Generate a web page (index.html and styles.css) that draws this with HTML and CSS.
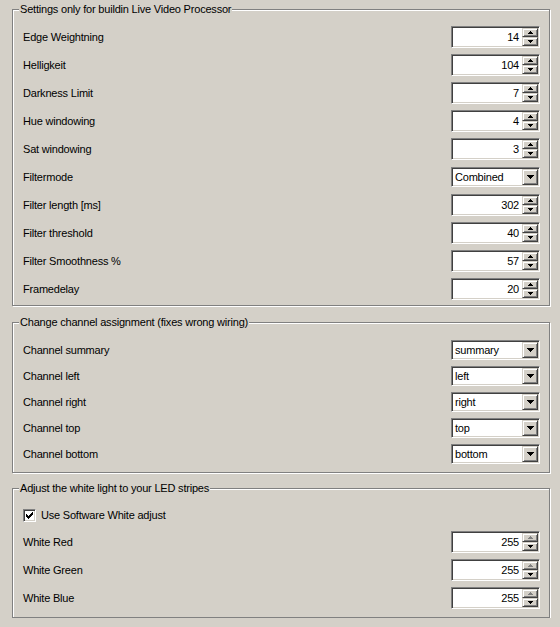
FILE: index.html
```html
<!DOCTYPE html>
<html lang="en">
<head>
    <meta charset="UTF-8">
    <title>Live Video Processor Settings</title>
    <link rel="stylesheet" href="styles.css">
</head>
<body>
    <div class="panel">
        <fieldset class="group group-video">
            <legend>Settings only for buildin Live Video Processor</legend>
            <div class="row">
                <label>Edge Weightning</label>
                <div class="spin"><span class="spin-val">14</span><span class="spin-btns"><span class="spin-btn"><svg width="5" height="3" viewBox="0 0 5 3"><path d="M2 0h1v1h1v1h1v1H0V2h1V1h1z"/></svg></span><span class="spin-btn"><svg width="5" height="3" viewBox="0 0 5 3"><path d="M0 0h5v1H4v1H3v1H2V2H1V1H0z"/></svg></span></span></div>
            </div>
            <div class="row">
                <label>Helligkeit</label>
                <div class="spin"><span class="spin-val">104</span><span class="spin-btns"><span class="spin-btn"><svg width="5" height="3" viewBox="0 0 5 3"><path d="M2 0h1v1h1v1h1v1H0V2h1V1h1z"/></svg></span><span class="spin-btn"><svg width="5" height="3" viewBox="0 0 5 3"><path d="M0 0h5v1H4v1H3v1H2V2H1V1H0z"/></svg></span></span></div>
            </div>
            <div class="row">
                <label>Darkness Limit</label>
                <div class="spin"><span class="spin-val">7</span><span class="spin-btns"><span class="spin-btn"><svg width="5" height="3" viewBox="0 0 5 3"><path d="M2 0h1v1h1v1h1v1H0V2h1V1h1z"/></svg></span><span class="spin-btn"><svg width="5" height="3" viewBox="0 0 5 3"><path d="M0 0h5v1H4v1H3v1H2V2H1V1H0z"/></svg></span></span></div>
            </div>
            <div class="row">
                <label>Hue windowing</label>
                <div class="spin"><span class="spin-val">4</span><span class="spin-btns"><span class="spin-btn"><svg width="5" height="3" viewBox="0 0 5 3"><path d="M2 0h1v1h1v1h1v1H0V2h1V1h1z"/></svg></span><span class="spin-btn"><svg width="5" height="3" viewBox="0 0 5 3"><path d="M0 0h5v1H4v1H3v1H2V2H1V1H0z"/></svg></span></span></div>
            </div>
            <div class="row">
                <label>Sat windowing</label>
                <div class="spin"><span class="spin-val">3</span><span class="spin-btns"><span class="spin-btn"><svg width="5" height="3" viewBox="0 0 5 3"><path d="M2 0h1v1h1v1h1v1H0V2h1V1h1z"/></svg></span><span class="spin-btn"><svg width="5" height="3" viewBox="0 0 5 3"><path d="M0 0h5v1H4v1H3v1H2V2H1V1H0z"/></svg></span></span></div>
            </div>
            <div class="row">
                <label>Filtermode</label>
                <div class="combo"><span class="combo-val">Combined</span><span class="combo-btn"><svg width="7" height="4" viewBox="0 0 7 4"><path d="M0 0h7v1H6v1H5v1H4v1H3V3H2V2H1V1H0z"/></svg></span></div>
            </div>
            <div class="row">
                <label>Filter length [ms]</label>
                <div class="spin"><span class="spin-val">302</span><span class="spin-btns"><span class="spin-btn"><svg width="5" height="3" viewBox="0 0 5 3"><path d="M2 0h1v1h1v1h1v1H0V2h1V1h1z"/></svg></span><span class="spin-btn"><svg width="5" height="3" viewBox="0 0 5 3"><path d="M0 0h5v1H4v1H3v1H2V2H1V1H0z"/></svg></span></span></div>
            </div>
            <div class="row">
                <label>Filter threshold</label>
                <div class="spin"><span class="spin-val">40</span><span class="spin-btns"><span class="spin-btn"><svg width="5" height="3" viewBox="0 0 5 3"><path d="M2 0h1v1h1v1h1v1H0V2h1V1h1z"/></svg></span><span class="spin-btn"><svg width="5" height="3" viewBox="0 0 5 3"><path d="M0 0h5v1H4v1H3v1H2V2H1V1H0z"/></svg></span></span></div>
            </div>
            <div class="row">
                <label>Filter Smoothness %</label>
                <div class="spin"><span class="spin-val">57</span><span class="spin-btns"><span class="spin-btn"><svg width="5" height="3" viewBox="0 0 5 3"><path d="M2 0h1v1h1v1h1v1H0V2h1V1h1z"/></svg></span><span class="spin-btn"><svg width="5" height="3" viewBox="0 0 5 3"><path d="M0 0h5v1H4v1H3v1H2V2H1V1H0z"/></svg></span></span></div>
            </div>
            <div class="row">
                <label>Framedelay</label>
                <div class="spin"><span class="spin-val">20</span><span class="spin-btns"><span class="spin-btn"><svg width="5" height="3" viewBox="0 0 5 3"><path d="M2 0h1v1h1v1h1v1H0V2h1V1h1z"/></svg></span><span class="spin-btn"><svg width="5" height="3" viewBox="0 0 5 3"><path d="M0 0h5v1H4v1H3v1H2V2H1V1H0z"/></svg></span></span></div>
            </div>
        </fieldset>

        <fieldset class="group group-channels">
            <legend>Change channel assignment (fixes wrong wiring)</legend>
            <div class="row short">
                <label>Channel summary</label>
                <div class="combo"><span class="combo-val">summary</span><span class="combo-btn"><svg width="7" height="4" viewBox="0 0 7 4"><path d="M0 0h7v1H6v1H5v1H4v1H3V3H2V2H1V1H0z"/></svg></span></div>
            </div>
            <div class="row short">
                <label>Channel left</label>
                <div class="combo"><span class="combo-val">left</span><span class="combo-btn"><svg width="7" height="4" viewBox="0 0 7 4"><path d="M0 0h7v1H6v1H5v1H4v1H3V3H2V2H1V1H0z"/></svg></span></div>
            </div>
            <div class="row short">
                <label>Channel right</label>
                <div class="combo"><span class="combo-val">right</span><span class="combo-btn"><svg width="7" height="4" viewBox="0 0 7 4"><path d="M0 0h7v1H6v1H5v1H4v1H3V3H2V2H1V1H0z"/></svg></span></div>
            </div>
            <div class="row short">
                <label>Channel top</label>
                <div class="combo"><span class="combo-val">top</span><span class="combo-btn"><svg width="7" height="4" viewBox="0 0 7 4"><path d="M0 0h7v1H6v1H5v1H4v1H3V3H2V2H1V1H0z"/></svg></span></div>
            </div>
            <div class="row short">
                <label>Channel bottom</label>
                <div class="combo"><span class="combo-val">bottom</span><span class="combo-btn"><svg width="7" height="4" viewBox="0 0 7 4"><path d="M0 0h7v1H6v1H5v1H4v1H3V3H2V2H1V1H0z"/></svg></span></div>
            </div>
        </fieldset>

        <fieldset class="group group-white">
            <legend>Adjust the white light to your LED stripes</legend>
            <div class="row short">
                <label class="check-label">
                    <span class="check"><svg width="7" height="7" viewBox="0 0 7 7"><path d="M0 2h1v1h1v1h1V3h1V2h1V1h1V0h1v3H6v1H5v1H4v1H3v1H2V6H1V5H0z"/></svg></span>
                    Use Software White adjust
                </label>
            </div>
            <div class="row">
                <label>White Red</label>
                <div class="spin"><span class="spin-val">255</span><span class="spin-btns"><span class="spin-btn off"><svg width="5" height="3" viewBox="0 0 5 3"><path d="M2 0h1v1h1v1h1v1H0V2h1V1h1z"/></svg></span><span class="spin-btn"><svg width="5" height="3" viewBox="0 0 5 3"><path d="M0 0h5v1H4v1H3v1H2V2H1V1H0z"/></svg></span></span></div>
            </div>
            <div class="row">
                <label>White Green</label>
                <div class="spin"><span class="spin-val">255</span><span class="spin-btns"><span class="spin-btn off"><svg width="5" height="3" viewBox="0 0 5 3"><path d="M2 0h1v1h1v1h1v1H0V2h1V1h1z"/></svg></span><span class="spin-btn"><svg width="5" height="3" viewBox="0 0 5 3"><path d="M0 0h5v1H4v1H3v1H2V2H1V1H0z"/></svg></span></span></div>
            </div>
            <div class="row">
                <label>White Blue</label>
                <div class="spin"><span class="spin-val">255</span><span class="spin-btns"><span class="spin-btn off"><svg width="5" height="3" viewBox="0 0 5 3"><path d="M2 0h1v1h1v1h1v1H0V2h1V1h1z"/></svg></span><span class="spin-btn"><svg width="5" height="3" viewBox="0 0 5 3"><path d="M0 0h5v1H4v1H3v1H2V2H1V1H0z"/></svg></span></span></div>
            </div>
        </fieldset>
    </div>
</body>
</html>
```

FILE: styles.css
```css
body {
    margin: 0;
    background-color: #d4d0c8;
    font-family: "Liberation Sans", Arial, sans-serif;
    font-size: 11px;
    letter-spacing: -0.2px;
    color: #000;
}
.panel {
    padding: 3px 10px 0 12px;
}
.group {
    margin: 0;
    min-width: 0;
    padding: 7px 9px 2px 10px;
    border: 1px solid #808080;
    box-shadow: 1px 1px 0 #fff, inset 1px 1px 0 #fff;
}
.group legend {
    margin-left: -4px;
    padding: 0 1px;
    line-height: 13px;
    background-color: #d4d0c8;
}
.group-channels {
    margin-top: 10px;
    padding-top: 8px;
    padding-bottom: 5px;
}
.group-white {
    margin-top: 9px;
    padding-bottom: 5px;
}
.row {
    display: flex;
    align-items: center;
    justify-content: space-between;
    height: 28px;
}
.row.short {
    height: 26px;
}
svg {
    display: block;
    shape-rendering: crispEdges;
}

/* sunken edit with up/down buttons */
.spin, .combo {
    box-sizing: border-box;
    width: 89px;
    display: flex;
    padding: 1px;
    background-color: #fff;
    border: 1px solid;
    border-color: #808080 #fff #fff #808080;
    box-shadow: inset 1px 1px 0 #404040, inset -1px -1px 0 #d4d0c8;
}
.spin {
    height: 22px;
}
.spin-val {
    flex: 1;
    text-align: right;
    padding-right: 3px;
    line-height: 18px;
}
.spin-btns {
    width: 16px;
    display: flex;
    flex-direction: column;
}
.spin-btn, .combo-btn {
    box-sizing: border-box;
    display: flex;
    align-items: center;
    justify-content: center;
    background-color: #d4d0c8;
    border: 1px solid;
    border-color: #d4d0c8 #404040 #404040 #d4d0c8;
    box-shadow: inset 1px 1px 0 #fff, inset -1px -1px 0 #808080;
}
.spin-btn {
    flex: 1;
}
.spin-btn.off svg {
    fill: #808080;
}

/* drop-down list */
.combo {
    height: 20px;
}
.combo-val {
    flex: 1;
    padding-left: 2px;
    line-height: 16px;
}
.combo-btn {
    width: 16px;
    height: 16px;
}

/* checkbox */
.check-label {
    display: flex;
    align-items: center;
    gap: 5px;
}
.check {
    box-sizing: border-box;
    width: 13px;
    height: 13px;
    padding: 2px;
    background-color: #fff;
    border: 1px solid;
    border-color: #808080 #fff #fff #808080;
    box-shadow: inset 1px 1px 0 #404040, inset -1px -1px 0 #d4d0c8;
}
```
